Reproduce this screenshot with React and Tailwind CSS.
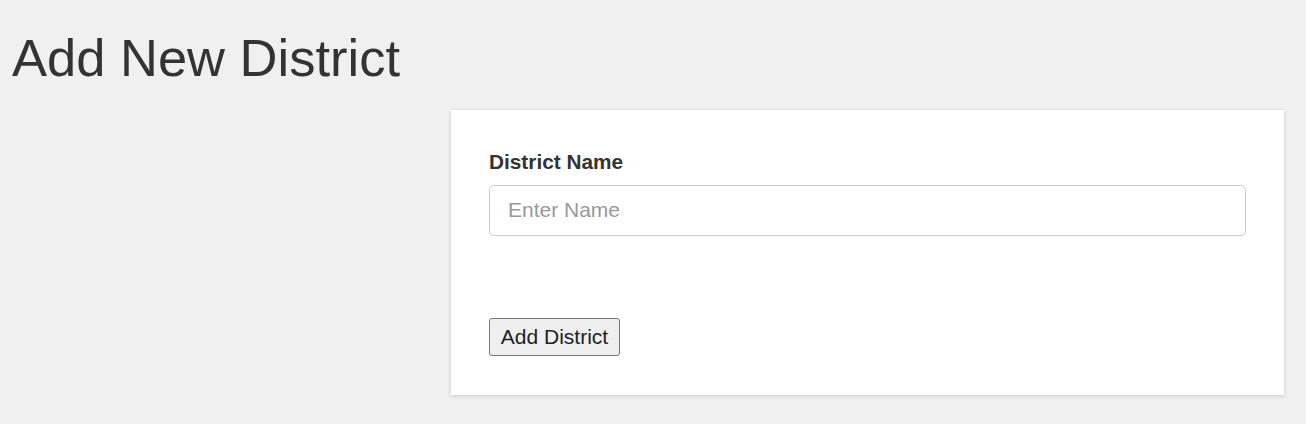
export default function App() {
  return (
    <div className="min-h-[424px] w-full bg-[#f0f0f0] text-[#333] font-['Liberation_Sans',Arial,sans-serif] pt-[32px]">
      <h1 className="pl-[12px] text-[52.5px] leading-none font-normal text-[#333]">Add New District</h1>
      <div className="flex justify-end pr-[22px] mt-[25px]">
        <div className="w-[833px] bg-white shadow-[0_1px_4px_rgba(0,0,0,0.15)] pt-[38px] pb-[39px] px-[38px]">
          <label className="block text-[20.8px] leading-[28px] font-bold text-[#333]">District Name</label>
          <input
            type="text"
            placeholder="Enter Name"
            className="mt-[9px] block w-full h-[51px] border border-[#cccccc] rounded-[5px] pl-[18px] text-[21px] text-[#333] placeholder:text-[#999] outline-none"
          />
          <button className="mt-[82px] w-[131px] h-[38px] border border-[#767676] bg-[#efefef] rounded-[3px] text-[21px] leading-none text-[#222] flex items-center justify-center">
            Add District
          </button>
        </div>
      </div>
    </div>
  );
}
